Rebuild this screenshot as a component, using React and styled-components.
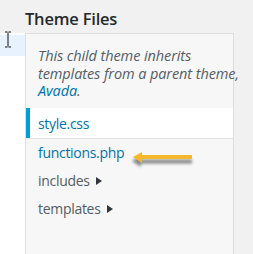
import React from "react";
import styled, { createGlobalStyle } from "styled-components";

const Global = createGlobalStyle`
  html, body { margin: 0; padding: 0; background: #f1f1f1; }
  body { font-family: "Open Sans", "Noto Sans", sans-serif; overflow: hidden; }
`;

const Page = styled.div`
  position: relative;
  display: grid;
  grid-template-columns: 25px 209px;
  grid-template-rows: 33px 221px;
  height: 254px;
  width: 253px;
`;

const Title = styled.h2`
  grid-column: 2;
  grid-row: 1;
  margin: 0;
  padding: 9px 0 0 0;
  font-size: 16.5px;
  font-weight: 600;
  color: #23282d;
  line-height: 20px;
  letter-spacing: -0.2px;
`;

const Editor = styled.div`
  grid-column: 1;
  grid-row: 2;
  background: #fff;
  padding-top: 2px;
`;

const ActiveLine = styled.div`
  height: 21px;
  background: #e8f2fe;
`;

const Panel = styled.div`
  grid-column: 2;
  grid-row: 2;
  background: #f7f7f7;
  border: 1px solid #ddd;
  border-bottom: none;
  display: flex;
  flex-direction: column;
`;

const Info = styled.p`
  margin: 0;
  padding: 13px 0 8.5px 12px;
  font-style: italic;
  font-size: 14.5px;
  line-height: 17.5px;
  color: #555d66;
  white-space: nowrap;
  letter-spacing: -0.1px;
`;

const Link = styled.a`
  color: #0073aa;
  text-decoration: none;
`;

const FileList = styled.ul`
  list-style: none;
  margin: 0;
  padding: 0;
`;

const Item = styled.li`
  display: flex;
  align-items: center;
  height: ${(p) => (p.$current ? "30px" : "28px")};
  background: ${(p) => (p.$current ? "#fff" : "transparent")};
  box-shadow: ${(p) => (p.$current ? "0 1px 0 #e2e2e2" : "none")};
  border-left: ${(p) => (p.$current ? "4px solid #00a0d2" : "none")};
  padding-left: ${(p) => (p.$current ? "8px" : "12px")};
  font-size: 14px;
  color: ${(p) => (p.$folder ? "#555d66" : "#0073aa")};
  letter-spacing: -0.3px;
`;

const Caret = styled.span`
  display: inline-block;
  width: 0;
  height: 0;
  margin-left: 6px;
  margin-top: 1px;
  border-top: 4px solid transparent;
  border-bottom: 4px solid transparent;
  border-left: 6px solid #32373c;
`;

const Cursor = styled.svg`
  position: absolute;
  left: 4px;
  top: 31px;
`;

const Arrow = styled.svg`
  position: absolute;
  left: 130px;
  top: 148px;
  overflow: visible;
`;

export default function App() {
  return (
    <>
      <Global />
      <Page>
        <Title>Theme Files</Title>
        <Editor>
          <ActiveLine />
        </Editor>
        <Panel>
          <Info>
            This child theme inherits
            <br />
            templates from a parent theme,
            <br />
            <Link>Avada</Link>.
          </Info>
          <FileList>
            <Item $current>style.css</Item>
            <Item>functions.php</Item>
            <Item $folder>
              includes<Caret />
            </Item>
            <Item $folder>
              templates<Caret />
            </Item>
          </FileList>
        </Panel>
        <Cursor width="8" height="17" viewBox="0 0 8 17">
          <path d="M1 1h2.5M4.5 1H7M4 1.5v14M1 16h2.5M4.5 16H7" stroke="#111" strokeWidth="1" fill="none" />
        </Cursor>
        <Arrow width="66" height="20" viewBox="0 0 66 20">
          <defs>
            <filter id="sh" x="-20%" y="-50%" width="140%" height="200%">
              <feGaussianBlur stdDeviation="1.5" />
            </filter>
          </defs>
          <path d="M3 11 L12 5 L12 9.5 L63 9.5 L63 13.5 L12 13.5 L12 17 Z" fill="#000" opacity="0.45" filter="url(#sh)" transform="translate(-1 2)" />
          <path d="M3 9 L12 4 L12 7 L62 7 L62 11 L12 11 L12 15 Z" fill="#f4b92a" />
        </Arrow>
      </Page>
    </>
  );
}
